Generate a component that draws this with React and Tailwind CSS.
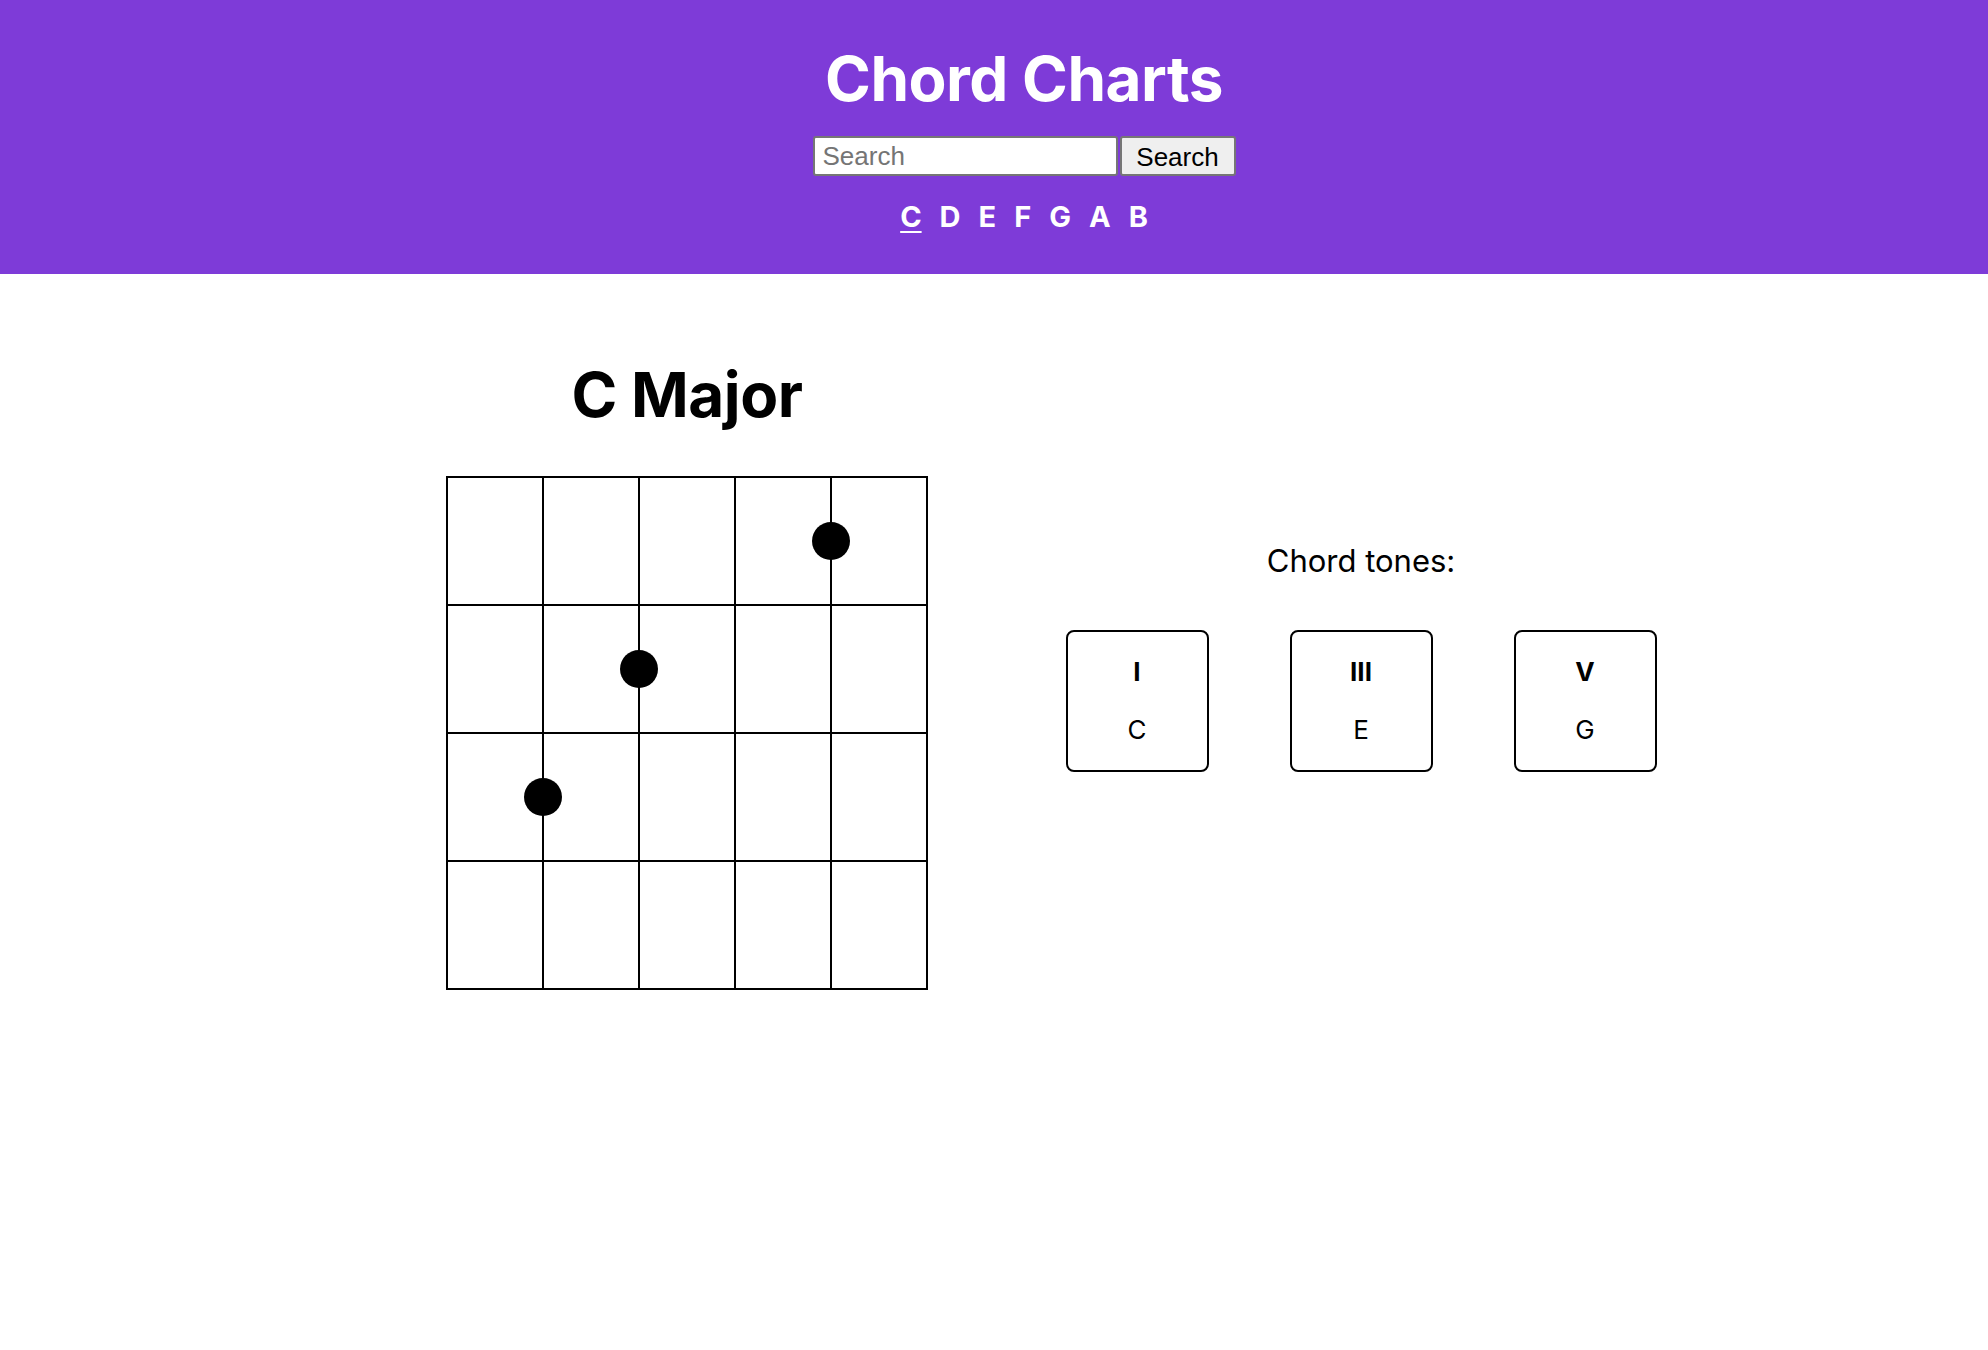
import React, { useState } from 'react'

const KEYS = ['C', 'D', 'E', 'F', 'G', 'A', 'B']

// C major, open shape: [string index (0 = low E), fret]
const CHORD = {
  name: 'C Major',
  dots: [
    [1, 3],
    [2, 2],
    [4, 1],
  ],
  tones: [
    { degree: 'I', note: 'C' },
    { degree: 'III', note: 'E' },
    { degree: 'V', note: 'G' },
  ],
}

const Header = ({ activeKey, setActiveKey }) => (
  <header className="bg-[#7e3bd8] pt-[48px] pb-[43px] flex flex-col items-center">
    <h1 className="text-white font-bold text-[62px] leading-none tracking-[-0.5px]">Chord Charts</h1>
    <form className="flex mt-[26px] gap-[2px]" onSubmit={(e) => e.preventDefault()}>
      <input
        type="text"
        placeholder="Search"
        className="w-[305px] h-[40px] px-[8px] border-2 border-[#767676] rounded-[3px] bg-white text-[26px] text-black placeholder:text-[#757575] font-['Liberation_Sans',Arial,sans-serif] outline-none"
      />
      <button
        type="submit"
        className="w-[116px] h-[40px] border-2 border-[#767676] rounded-[3px] bg-[#efefef] text-[26px] text-black font-['Liberation_Sans',Arial,sans-serif]"
      >
        Search
      </button>
    </form>
    <nav className="flex gap-[18px] mt-[26px]">
      {KEYS.map((k) => (
        <a
          key={k}
          href="#"
          onClick={(e) => {
            e.preventDefault()
            setActiveKey(k)
          }}
          className={
            'text-white font-bold text-[29px] leading-none ' +
            (k === activeKey ? 'underline underline-offset-[4px] decoration-2' : 'no-underline')
          }
        >
          {k}
        </a>
      ))}
    </nav>
  </header>
)

const Fretboard = ({ dots }) => (
  <div className="relative border-2 border-black grid grid-cols-[96px_96px_96px_96px_94px] grid-rows-[128px_128px_128px_126px]">
    {Array.from({ length: 20 }).map((_, i) => (
      <div
        key={i}
        className={
          'border-black ' +
          (i % 5 !== 4 ? 'border-r-2 ' : '') +
          (i < 15 ? 'border-b-2' : '')
        }
      />
    ))}
    {dots.map(([s, f]) => (
      <span
        key={s + '-' + f}
        className="absolute w-[38px] h-[38px] rounded-full bg-black"
        style={{ left: s * 96 - 1 - 19, top: 63 + (f - 1) * 128 - 19 }}
      />
    ))}
  </div>
)

const ToneCard = ({ degree, note }) => (
  <div className="w-[143px] h-[142px] border-2 border-black rounded-[8px] flex flex-col items-center justify-center gap-[32px]">
    <span className="font-bold text-[26px] leading-[26px]">{degree}</span>
    <span className="text-[26px] leading-[26px]">{note}</span>
  </div>
)

export default function App() {
  const [activeKey, setActiveKey] = useState('C')

  return (
    <div className="min-h-screen bg-white overflow-hidden font-['Inter',sans-serif] text-black">
      <div className="w-[2048px]">
        <Header activeKey={activeKey} setActiveKey={setActiveKey} />
        <main className="w-[1348px] mx-auto grid grid-cols-2 pt-[90px]">
          <section className="flex flex-col items-center">
            <h2 className="font-bold text-[62px] leading-none tracking-[-0.5px]">{CHORD.name}</h2>
            <div className="mt-[50px]">
              <Fretboard dots={CHORD.dots} />
            </div>
          </section>
          <section className="flex flex-col items-center pt-[181px]">
            <p className="text-[31px] leading-none">Chord tones:</p>
            <div className="flex gap-[81px] mt-[54px]">
              {CHORD.tones.map((t) => (
                <ToneCard key={t.degree} {...t} />
              ))}
            </div>
          </section>
        </main>
      </div>
    </div>
  )
}
